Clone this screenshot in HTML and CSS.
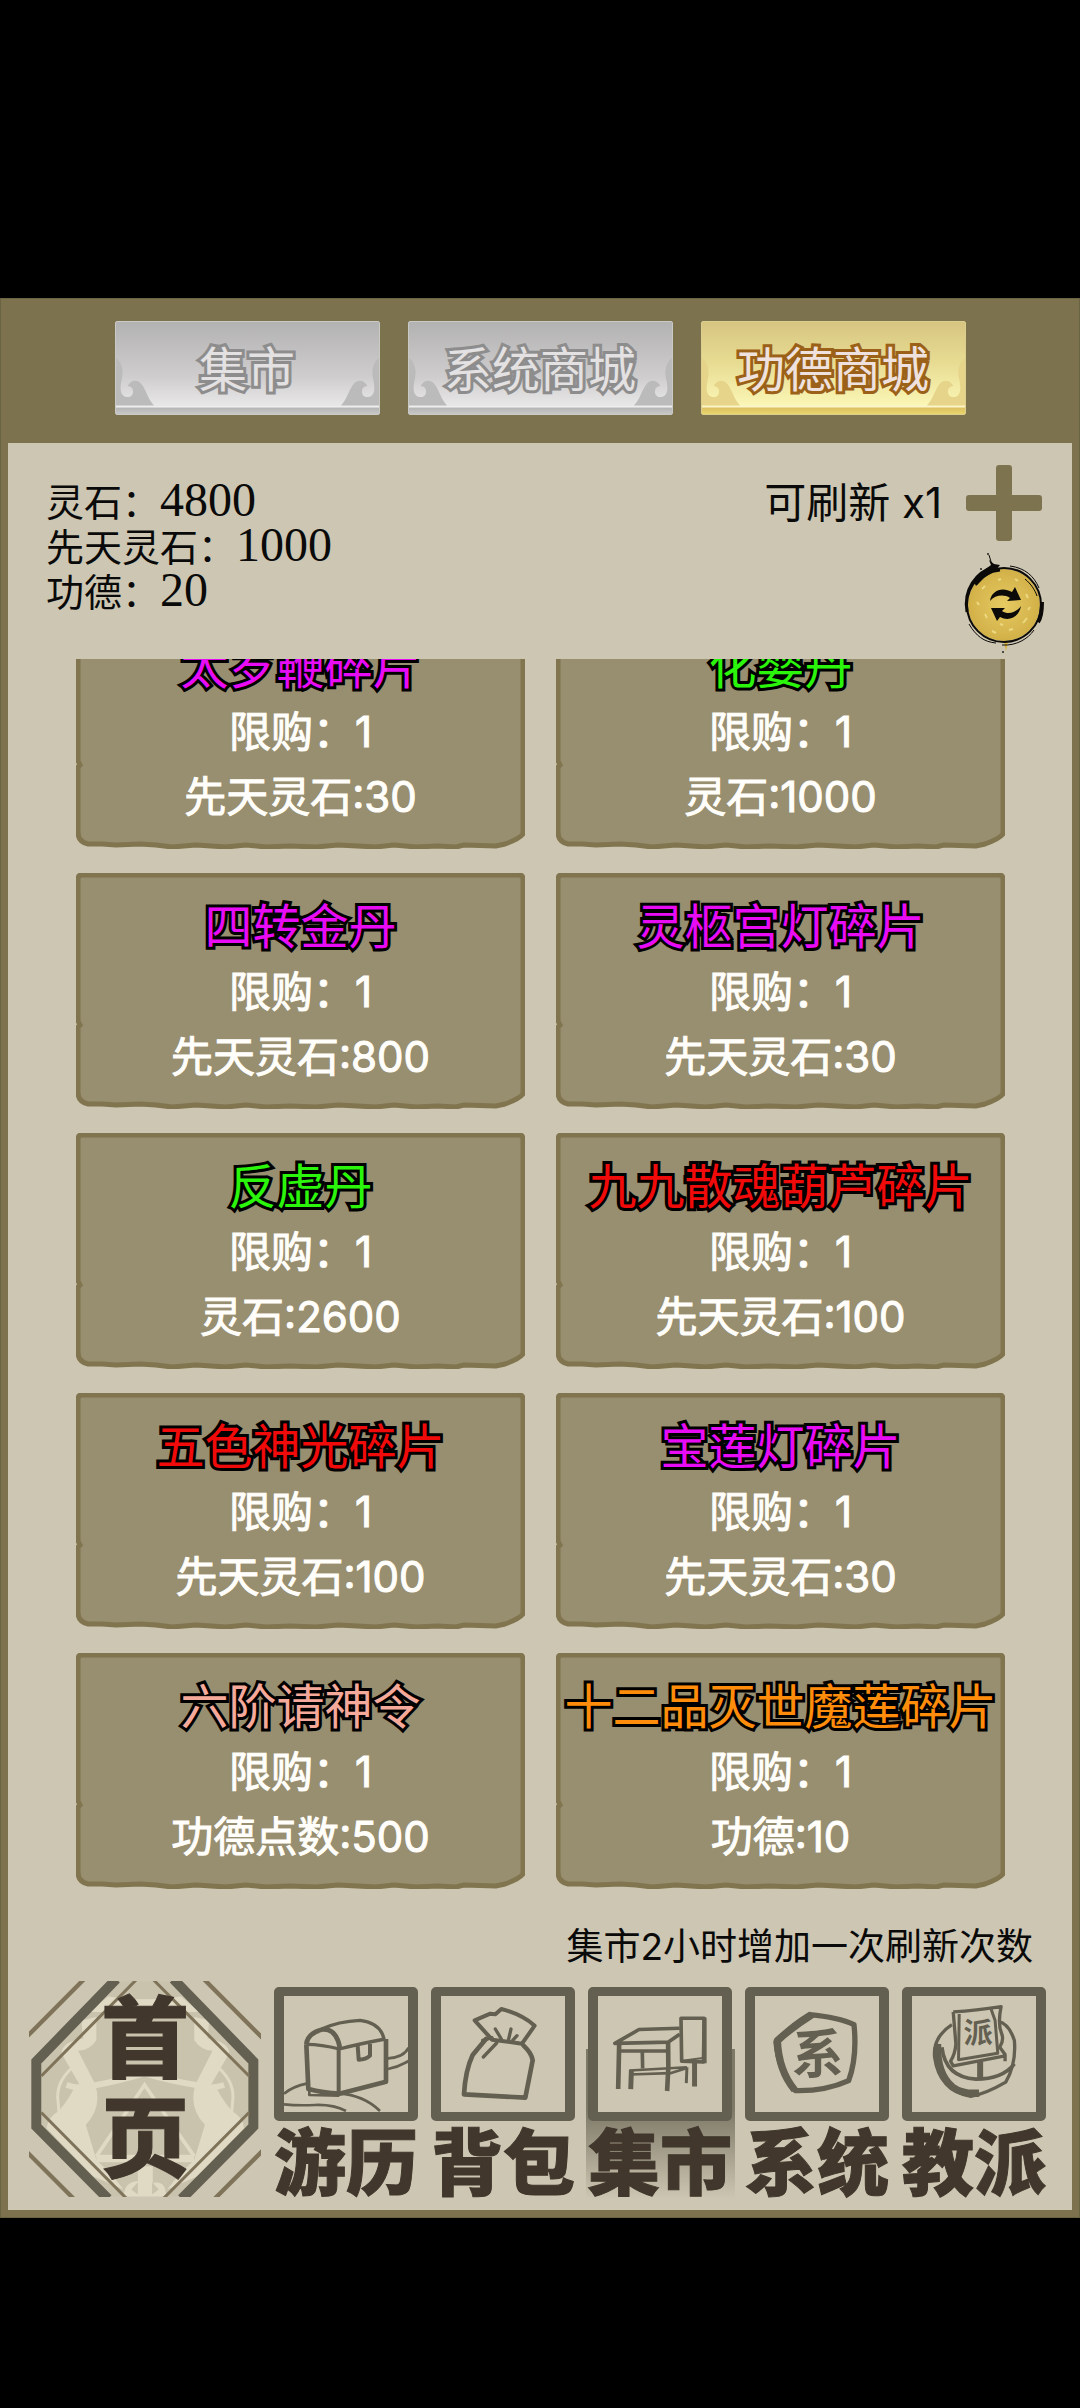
FILE: index.html
```html
<!DOCTYPE html>
<html lang="zh-CN">
<head>
    <meta charset="UTF-8">
    <meta name="viewport" content="width=device-width, initial-scale=1.0">
    <title>功德商城</title>
    <link rel="stylesheet" href="styles.css">
</head>
<body>
    <svg class="defs" aria-hidden="true">
        <symbol id="curl" viewBox="0 0 39 48">
            <path d="M1 0C6 5 8 12 6 21C4 29 4 37 9 39C15 41 19 37 17 31C16 29 14 28 12 28C15 22 22 21 26 26C31 32 33 42 39 48H0V0Z"/>
        </symbol>
        <symbol id="plate" viewBox="0 0 449 236" preserveAspectRatio="none">
            <path d="M6 2H443Q447 2 447 6V221Q443 226 429 231L420 233L388 232L380 234L362 233L340 234L318 232L300 234L281 233L262 232L240 234L214 233L190 234L170 232L150 234L120 232L96 234L80 232L64 231L40 232L26 231L12 231Q2 229 2 219V154L4 152L2 148V6Q2 2 6 2Z"/>
        </symbol>
    </svg>

    <main class="panel">
        <nav class="tabs">
            <button class="tab">
                <svg class="curl"><use href="#curl"/></svg>
                集市
                <svg class="curl right"><use href="#curl"/></svg>
            </button>
            <button class="tab">
                <svg class="curl"><use href="#curl"/></svg>
                系统商城
                <svg class="curl right"><use href="#curl"/></svg>
            </button>
            <button class="tab active">
                <svg class="curl"><use href="#curl"/></svg>
                功德商城
                <svg class="curl right"><use href="#curl"/></svg>
            </button>
        </nav>

        <section class="content">
            <div class="info">
                <div class="stats">
                    <p>灵石：<span>4800</span></p>
                    <p>先天灵石：<span>1000</span></p>
                    <p>功德：<span>20</span></p>
                </div>
                <div class="refresh">
                    <div class="refresh-count">
                        <span>可刷新 x1</span>
                        <button class="icon-btn" aria-label="增加刷新次数">
                            <svg width="76" height="76" viewBox="0 0 76 76" fill="#7e734f">
                                <rect x="30" y="0" width="16" height="76" rx="3"/>
                                <rect x="0" y="30" width="76" height="16" rx="3"/>
                            </svg>
                        </button>
                    </div>
                    <button class="icon-btn" aria-label="刷新">
                        <svg width="84" height="102" viewBox="0 0 84 102">
                            <defs>
                                <radialGradient id="gold">
                                    <stop offset="0" stop-color="#e6cb62"/>
                                    <stop offset="1" stop-color="#d2b048"/>
                                </radialGradient>
                            </defs>
                            <circle cx="42" cy="53" r="36" fill="url(#gold)"/>
                            <path d="M20 37l3-3M30 79l4 2M61 71l4-5M23 62l2 4M53 27l3 2M64 42l2 4M36 28l3-1M47 78l4-1M15 50l2 3M66 58l2-3M38 72l3 1" stroke="#ecd880" stroke-width="2" fill="none"/>
                            <path d="M42 90l2 9l2-9z" fill="#d8b341"/>
                            <g fill="none" stroke="#0b0a08">
                                <circle cx="42" cy="53" r="37" stroke-width="2"/>
                                <path d="M5 60C1 38 14 20 32 15" stroke-width="3"/>
                                <path d="M14 32C20 23 27 19 38 18" stroke-width="3"/>
                                <path d="M80 50C80 60 79 66 76 70" stroke-width="4"/>
                                <path d="M48 14C63 16 72 24 77 36" stroke-width="1"/>
                                <path d="M63 27C69 32 73 38 75 44" stroke-width="1"/>
                                <path d="M7 72C14 84 22 90 34 91" stroke-width="1"/>
                                <path d="M40 93C54 94 66 87 72 78" stroke-width="1"/>
                                <path d="M27 3l3 10" stroke-width="1"/>
                            </g>
                            <path d="M12 30C17 21 24 17 29 13L27 8L32 12L38 13L34 18L22 26L14 34Z" fill="#0b0a08"/>
                            <circle cx="26" cy="2" r="1" fill="#222"/>
                            <circle cx="19" cy="17" r="1" fill="#222"/>
                            <circle cx="41" cy="100" r="1" fill="#222"/>
                            <path d="M28 49C29 39 40 34 50 40L53 35L59 48L45 49L48 46C42 42 33 43 28 49Z" fill="#0b0a08"/>
                            <path d="M59 54C57 65 47 70 38 65L35 69L29 56L43 56L40 59C46 63 54 61 59 54Z" fill="#0b0a08"/>
                        </svg>
                    </button>
                </div>
            </div>

            <div class="list">
                <div class="goods">
                    <button class="card purple"><svg class="plate"><use href="#plate"/></svg><b>太岁鞭碎片</b><span>限购：1</span><span>先天灵石:30</span></button>
                    <button class="card green"><svg class="plate"><use href="#plate"/></svg><b>化婴丹</b><span>限购：1</span><span>灵石:1000</span></button>
                    <button class="card purple"><svg class="plate"><use href="#plate"/></svg><b>四转金丹</b><span>限购：1</span><span>先天灵石:800</span></button>
                    <button class="card purple"><svg class="plate"><use href="#plate"/></svg><b>灵柩宫灯碎片</b><span>限购：1</span><span>先天灵石:30</span></button>
                    <button class="card green"><svg class="plate"><use href="#plate"/></svg><b>反虚丹</b><span>限购：1</span><span>灵石:2600</span></button>
                    <button class="card red"><svg class="plate"><use href="#plate"/></svg><b>九九散魂葫芦碎片</b><span>限购：1</span><span>先天灵石:100</span></button>
                    <button class="card red"><svg class="plate"><use href="#plate"/></svg><b>五色神光碎片</b><span>限购：1</span><span>先天灵石:100</span></button>
                    <button class="card purple"><svg class="plate"><use href="#plate"/></svg><b>宝莲灯碎片</b><span>限购：1</span><span>先天灵石:30</span></button>
                    <button class="card pink"><svg class="plate"><use href="#plate"/></svg><b>六阶请神令</b><span>限购：1</span><span>功德点数:500</span></button>
                    <button class="card orange"><svg class="plate"><use href="#plate"/></svg><b>十二品灭世魔莲碎片</b><span>限购：1</span><span>功德:10</span></button>
                </div>
            </div>

            <p class="note">集市2小时增加一次刷新次数</p>

            <nav class="menu">
                <a class="home" href="#home">
                    <svg viewBox="87 63 699 648" aria-hidden="true">
                        <path d="M350 63L124 303V500L335 711H540L750 500V303L522 63Z" fill="#c9c2ad"/>
                        <g fill="#e0dac5">
                            <path d="M325 108Q435 125 545 108L600 155H270Z"/>
                            <path d="M245 180L290 170V240Q270 270 235 272L285 370Q310 440 258 495L290 600L340 650L372 690L280 650L140 505Q145 470 175 455Q205 420 220 390L240 375L185 280Q185 245 250 235Z"/>
                            <path d="M630 180L585 170V240Q605 270 640 272L590 370Q565 440 617 495L585 600L535 650L503 690L595 650L735 505Q730 470 700 455Q670 420 655 390L635 375L690 280Q690 245 625 235Z"/>
                            <path d="M415 620H460V670Q500 660 500 711H372Q375 665 415 665Z"/>
                            <path d="M290 585H585V608H290Z"/>
                        </g>
                        <g fill="none" stroke="#e0dac5">
                            <path d="M215 325Q165 370 175 430Q180 480 175 520M660 325Q710 370 700 430Q695 480 700 520" stroke-width="9"/>
                            <path d="M290 590L435 375L585 590" stroke-width="11"/>
                            <path d="M200 375Q240 390 290 375Q360 362 435 340Q510 362 590 375Q630 390 675 375" stroke-width="18"/>
                        </g>
                        <path d="M395 690L415 668V705ZM478 690L458 668V705Z" fill="#c9c2ad"/>
                        <path d="M350 56L109 304V500L325 718M522 56L763 304V500L547 718" fill="none" stroke="#635f51" stroke-width="30"/>
                        <path d="M410 58L124 348M462 58L750 348M124 458L380 716M750 458L493 716" fill="none" stroke="#7f745a" stroke-width="9"/>
                        <path d="M255 54L80 230M612 54L793 236M80 576L222 718M793 571L646 718" fill="none" stroke="#7f745a" stroke-width="13"/>
                    </svg>
                    <span>首</span>
                    <span>页</span>
                </a>
                <a class="item" href="#travel">
                    <svg class="frame" viewBox="72 114 372 342" aria-hidden="true">
                        <g fill="none" stroke="#635f51" stroke-linejoin="round">
                            <path d="M139 256Q142 222 190 211Q230 210 240 268" stroke-width="14"/>
                            <path d="M185 210Q235 187 300 184Q362 192 372 240" stroke-width="10"/>
                            <path d="M139 256Q185 256 238 270Q300 254 376 240" stroke-width="10"/>
                            <path d="M139 256L145 390Q190 402 238 404L378 368V240" stroke-width="14"/>
                            <path d="M236 270V402" stroke-width="12"/>
                            <path d="M293 260L296 302Q318 302 330 290V254" stroke-width="12"/>
                            <path d="M148 395V408L238 410" stroke-width="8"/>
                            <path d="M72 404Q100 382 140 374M72 436Q110 440 165 438Q220 436 258 456M238 404Q310 408 360 456" stroke-width="8"/>
                            <path d="M384 298Q430 296 446 266M384 330Q415 324 446 306" stroke-width="8"/>
                        </g>
                    </svg>
                    <span>游历</span>
                </a>
                <a class="item" href="#bag">
                    <svg class="frame" viewBox="537 110 372 342" aria-hidden="true">
                        <g fill="none" stroke="#635f51" stroke-width="12" stroke-linejoin="round" stroke-linecap="round">
                            <path d="M690 238L638 180L685 160L700 162L718 146Q780 162 818 196L780 250L690 238"/>
                            <path d="M672 236Q650 262 632 284Q610 330 606 402L790 412L812 300Q810 280 785 256" stroke-width="14"/>
                            <path d="M700 206L718 236M747 206L740 236M765 226L752 240M704 248L664 290M662 240L690 232" stroke-width="10"/>
                        </g>
                    </svg>
                    <span>背包</span>
                </a>
                <a class="item active" href="#market">
                    <svg class="frame" viewBox="81 108 375 344" aria-hidden="true">
                        <g fill="none" stroke="#635f51" stroke-width="11" stroke-linejoin="round">
                            <path d="M328 202L205 206L132 248L294 244L328 220"/>
                            <path d="M145 250L142 386M293 246Q296 320 290 392" stroke-width="14"/>
                            <path d="M150 271H290M215 274L216 324"/>
                            <path d="M176 330L350 320M176 342L300 338L350 322" stroke-width="8"/>
                            <path d="M182 328L180 386M373 306V378" stroke-width="15"/>
                            <path d="M350 320L348 368" stroke-width="9"/>
                            <path d="M332 172H402L400 304L334 302Z"/>
                            <path d="M403 170V308" stroke-width="13"/>
                            <path d="M336 300L398 292" stroke-width="6"/>
                        </g>
                    </svg>
                    <span>集市</span>
                </a>
                <a class="item" href="#system">
                    <svg class="frame" viewBox="549 108 372 344" aria-hidden="true">
                        <g fill="none" stroke="#635f51" stroke-linejoin="round">
                            <path d="M846 192Q800 170 712 162Q650 200 612 245Q620 330 670 390Q760 392 830 360Q856 290 846 192Z" stroke-width="16"/>
                            <path d="M720 162Q660 200 616 240Q620 330 668 388" stroke-width="22"/>
                        </g>
                        <text x="737" y="336" font-size="156">系</text>
                    </svg>
                    <span>系统</span>
                </a>
                <a class="item" href="#sect">
                    <svg class="frame" viewBox="128 289 373 343" aria-hidden="true">
                        <g fill="none" stroke="#635f51" stroke-linejoin="round">
                            <path d="M248 372Q190 410 196 470Q210 570 305 588Q350 580 410 545Q442 490 436 420Q420 370 388 362" stroke-width="10"/>
                            <path d="M205 430Q202 520 250 560Q280 582 330 578" stroke-width="22"/>
                            <path d="M218 440Q228 530 320 536Q400 536 436 490" stroke-width="11"/>
                            <path d="M252 334Q320 330 396 318Q385 370 398 400Q405 420 392 440L408 462V482M252 334L260 430Q258 460 244 482L252 496L408 466" stroke-width="10"/>
                            <path d="M270 340L268 478L386 458L378 360L366 326" stroke-width="9"/>
                            <path d="M333 484V534" stroke-width="18"/>
                        </g>
                        <text x="327" y="427" font-size="88">派</text>
                    </svg>
                    <span>教派</span>
                </a>
            </nav>
        </section>
    </main>
</body>
</html>
```
FILE: styles.css
```css
* {
    box-sizing: border-box;
}

body {
    margin: 0;
    padding: 298px 0 190px;
    background-color: #000;
    color: #0a0a0a;
    font-family: Inter, "Noto Sans CJK SC", sans-serif;
}

p {
    margin: 0;
}

button {
    margin: 0;
    padding: 0;
    border: none;
    background: none;
    font-family: inherit;
    cursor: pointer;
}

.defs {
    display: none;
}

.panel {
    padding: 0 8px 8px;
    background-color: #7d724e;
    box-shadow: inset 0 0 0 1px #6a6344;
}

/* top tabs */
.tabs {
    display: flex;
    justify-content: center;
    gap: 28px;
    padding: 23px 0 28px;
}

.tab {
    position: relative;
    flex: 0 1 265px;
    height: 94px;
    padding-top: 4px;
    border: 1px solid #c9c9c6;
    border-radius: 2px;
    background: linear-gradient(#b3b2b2, #cfcdce 60%, #e9e8e8 84px, #f3f3f3 85px, #b6b5b5 86px, #c8c7c7);
    color: #e3e1e1;
    font-size: 48px;
    line-height: 84px;
    white-space: nowrap;
    -webkit-text-stroke: 6px #8e8d8d;
    paint-order: stroke fill;
}

.tab.active {
    border-color: #dccf8e;
    background: linear-gradient(#d6c581, #e8dc93 45%, #faf5b4 82px, #fbf6cc 85px, #dcc062 86px, #ead66c);
    color: #efe2de;
    -webkit-text-stroke-color: #9c6119;
}

.curl {
    position: absolute;
    left: 0;
    bottom: 8px;
    width: 38px;
    height: 48px;
    fill: #bcbbbb;
}

.curl.right {
    left: auto;
    right: 0;
    transform: scaleX(-1);
}

.tab.active .curl {
    fill: #e5d489;
}

/* main area */
.content {
    padding-bottom: 11px;
    background-color: #cdc6b2;
}

.info {
    display: flex;
    justify-content: space-between;
    height: 216px;
    padding: 22px 26px 0 38px;
}

.stats {
    padding-top: 12px;
    font-size: 38px;
    line-height: 45px;
}

.stats p {
    height: 45px;
    white-space: nowrap;
}

.stats span {
    font-family: "Liberation Serif", serif;
    font-size: 48px;
}

.refresh {
    display: flex;
    flex-direction: column;
    align-items: flex-end;
    gap: 11px;
}

.refresh-count {
    display: flex;
    align-items: center;
    gap: 20px;
    font-size: 42px;
    line-height: 76px;
}

.icon-btn {
    width: 84px;
}

.icon-btn svg {
    display: block;
    margin: 0 auto;
}

/* goods list, already scrolled down a little */
.list {
    overflow: hidden;
    padding: 0 67px 0 68px;
}

.goods {
    display: grid;
    grid-template-columns: 1fr 1fr;
    gap: 24px 31px;
    margin-top: -46px;
}

.card {
    position: relative;
    display: flex;
    flex-direction: column;
    align-items: center;
    height: 236px;
    padding-top: 21px;
    color: #fffefa;
    font-size: 42px;
    font-weight: 500;
    line-height: 65px;
    white-space: nowrap;
}

.plate {
    position: absolute;
    inset: 0;
    width: 100%;
    height: 100%;
    fill: #988e70;
    stroke: #80754f;
    stroke-width: 5px;
}

.card b,
.card span {
    position: relative;
}

.card span {
    font-weight: 400;
    -webkit-text-stroke: 1px #fffefa;
}

.card b {
    font-size: 48px;
    font-weight: 400;
    -webkit-text-stroke: 6px #000;
    paint-order: stroke fill;
}

.purple b { color: #e80cf5; }
.green b { color: #2cf50c; }
.red b { color: #f00a0a; }
.pink b { color: #f5a99b; }
.orange b { color: #ff8c0a; }

.note {
    padding: 30px 39px 6px 0;
    font-size: 37px;
    line-height: 56px;
    text-align: right;
}

/* bottom menu */
.menu {
    display: flex;
    gap: 13px;
    padding: 0 26px 0 21px;
}

.menu a {
    color: #41372c;
    font-weight: 900;
    text-align: center;
    text-decoration: none;
    -webkit-text-stroke: 1px #41372c;
}

.home {
    position: relative;
    flex: 0 0 232px;
    height: 216px;
    padding-top: 7px;
    font-size: 88px;
    line-height: 100px;
}

.home svg {
    position: absolute;
    left: 0;
    top: 0;
    width: 100%;
    height: 100%;
}

.home span {
    position: relative;
    display: block;
}

.item {
    position: relative;
    flex: 1 1 0;
    min-width: 0;
    padding-top: 6px;
    font-size: 72px;
    line-height: 72px;
    white-space: nowrap;
}

.frame {
    position: relative;
    display: block;
    width: 100%;
    height: 134px;
    margin-bottom: 6px;
    border: solid #635f51;
    border-width: 9px 10px;
    border-radius: 5px;
    background-color: #cdc6b2;
}

.frame text {
    fill: #635f51;
    font-weight: 700;
    text-anchor: middle;
    -webkit-text-stroke: 0;
}

.item span {
    position: relative;
}

.item.active::before {
    content: "";
    position: absolute;
    left: -2px;
    right: -3px;
    bottom: 0;
    height: 150px;
    background: linear-gradient(#7d7967, #7d7967 40%, #7d796700);
}
```
